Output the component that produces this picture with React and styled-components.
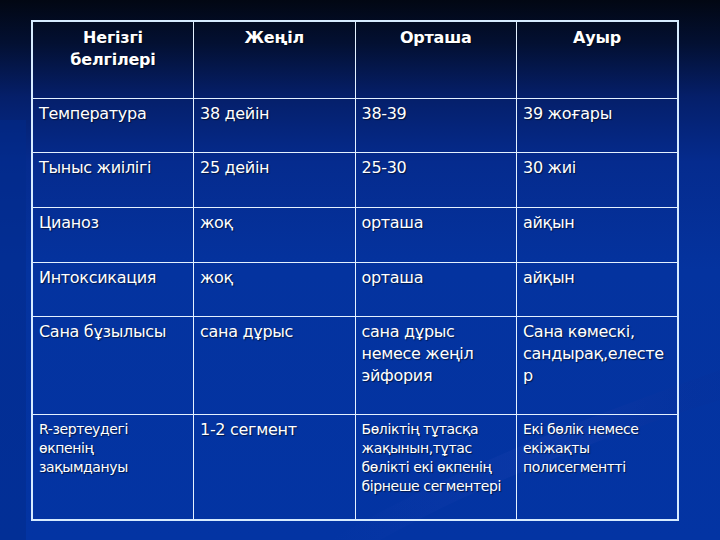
import React from "react";
import styled, { createGlobalStyle } from "styled-components";

const Global = createGlobalStyle`
  html, body { margin: 0; padding: 0; }
  body {
    width: 720px;
    height: 540px;
    overflow: hidden;
    font-family: "DejaVu Sans", Verdana, sans-serif;
  }
`;

const Slide = styled.div`
  position: relative;
  width: 720px;
  height: 540px;
  box-sizing: border-box;
  padding: 20px 0 0 31px;
  background: linear-gradient(
    180deg,
    #020713 0%,
    #031032 8%,
    #051f6a 18%,
    #052b8e 30%,
    #04339f 50%,
    #0334a3 100%
  );
  overflow: hidden;
`;

const Swoosh = styled.svg`
  position: absolute;
  left: 0;
  top: 0;
  pointer-events: none;
`;

const Table = styled.table`
  position: relative;
  width: 648px;
  border-collapse: collapse;
  table-layout: fixed;
  border: 2px solid #d6ebff;
  color: #ffffff;
  text-shadow: 1px 1px 1px rgba(0, 0, 0, 0.55);
`;

const Row = styled.tr`
  height: ${(p) => p.$h}px;
`;

const Head = styled.th`
  border: 1px solid #e4f1ff;
  vertical-align: top;
  text-align: center;
  font-weight: bold;
  font-size: 16px;
  line-height: 22px;
  padding: 5px 4px 0;
  letter-spacing: -0.2px;
`;

const Cell = styled.td`
  border: 1px solid #e4f1ff;
  vertical-align: top;
  text-align: left;
  font-size: ${(p) => (p.$small ? 14 : 16)}px;
  line-height: ${(p) => (p.$small ? 19 : 22)}px;
  padding: ${(p) => (p.$small ? "5px 6px 0 6px" : "4px 6px 0 6px")};
  letter-spacing: ${(p) => (p.$small ? "-0.4px" : "-0.3px")};
`;

const rows = [
  { h: 54, cells: ["Температура", "38 дейін", "38-39", "39 жоғары"] },
  { h: 55, cells: ["Тыныс жиілігі", "25 дейін", "25-30", "30 жиі"] },
  { h: 55, cells: ["Цианоз", "жоқ", "орташа", "айқын"] },
  { h: 54, cells: ["Интоксикация", "жоқ", "орташа", "айқын"] },
  {
    h: 98,
    cells: [
      "Сана бұзылысы",
      "сана дұрыс",
      ["сана дұрыс", "немесе жеңіл", "эйфория"],
      ["Сана көмескі,", "сандырақ,елесте", "р"],
    ],
  },
  {
    h: 106,
    small: [true, false, true, true],
    cells: [
      ["R-зертеудегі", "өкпенің", "зақымдануы"],
      "1-2 сегмент",
      ["Бөліктің тұтасқа", "жақынын,тұтас", "бөлікті екі өкпенің", "бірнеше сегментері"],
      ["Екі бөлік немесе", "екіжақты", "полисегментті"],
    ],
  },
];

function Lines({ value }) {
  if (!Array.isArray(value)) return value;
  return value.map((l, i) => (
    <React.Fragment key={i}>
      {i > 0 && <br />}
      {l}
    </React.Fragment>
  ));
}

export default function App() {
  return (
    <>
      <Global />
      <Slide>
        <Swoosh width="720" height="540" viewBox="0 0 720 540">
          <defs>
            <linearGradient id="sw" x1="0" y1="0" x2="1" y2="0">
              <stop offset="0" stopColor="#1a3fb0" stopOpacity="0" />
              <stop offset="0.6" stopColor="#1b40ae" stopOpacity="0.35" />
              <stop offset="1" stopColor="#0a2a90" stopOpacity="0.1" />
            </linearGradient>
          </defs>
          <path d="M330 540 C 450 470, 580 420, 720 370 L 720 400 C 590 440, 470 490, 380 540 Z" fill="url(#sw)" />
          <rect x="0" y="120" width="26" height="420" fill="#022a8a" opacity="0.5" />
        </Swoosh>
        <Table>
          <thead>
            <Row $h={77}>
              <Head>Негізгі<br />белгілері</Head>
              <Head>Жеңіл</Head>
              <Head>Орташа</Head>
              <Head>Ауыр</Head>
            </Row>
          </thead>
          <tbody>
            {rows.map((r, i) => (
              <Row key={i} $h={r.h}>
                {r.cells.map((c, j) => (
                  <Cell key={j} $small={r.small ? r.small[j] : false}>
                    <Lines value={c} />
                  </Cell>
                ))}
              </Row>
            ))}
          </tbody>
        </Table>
      </Slide>
    </>
  );
}
